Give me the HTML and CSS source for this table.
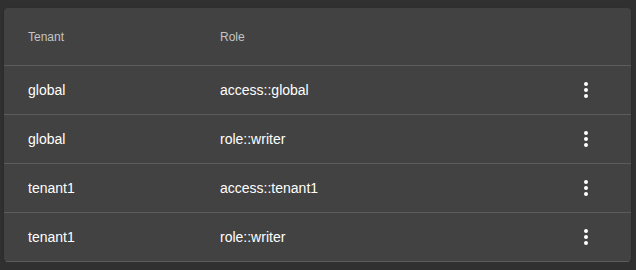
FILE: index.html
```html
<!DOCTYPE html>
<html lang="en">
<head>
    <meta charset="UTF-8">
    <meta name="viewport" content="width=device-width, initial-scale=1.0">
    <title>Tenant Roles</title>
    <link rel="stylesheet" href="styles.css">
</head>
<body>
    <div class="table-card">
        <table class="role-table">
            <thead>
                <tr>
                    <th class="col-tenant">Tenant</th>
                    <th>Role</th>
                    <th class="col-actions"></th>
                </tr>
            </thead>
            <tbody>
                <tr>
                    <td>global</td>
                    <td>access::global</td>
                    <td class="col-actions"><button class="menu-btn" aria-label="More"><svg viewBox="0 0 24 24" width="24" height="24"><circle cx="12" cy="6" r="2"/><circle cx="12" cy="12" r="2"/><circle cx="12" cy="18" r="2"/></svg></button></td>
                </tr>
                <tr>
                    <td>global</td>
                    <td>role::writer</td>
                    <td class="col-actions"><button class="menu-btn" aria-label="More"><svg viewBox="0 0 24 24" width="24" height="24"><circle cx="12" cy="6" r="2"/><circle cx="12" cy="12" r="2"/><circle cx="12" cy="18" r="2"/></svg></button></td>
                </tr>
                <tr>
                    <td>tenant1</td>
                    <td>access::tenant1</td>
                    <td class="col-actions"><button class="menu-btn" aria-label="More"><svg viewBox="0 0 24 24" width="24" height="24"><circle cx="12" cy="6" r="2"/><circle cx="12" cy="12" r="2"/><circle cx="12" cy="18" r="2"/></svg></button></td>
                </tr>
                <tr>
                    <td>tenant1</td>
                    <td>role::writer</td>
                    <td class="col-actions"><button class="menu-btn" aria-label="More"><svg viewBox="0 0 24 24" width="24" height="24"><circle cx="12" cy="6" r="2"/><circle cx="12" cy="12" r="2"/><circle cx="12" cy="18" r="2"/></svg></button></td>
                </tr>
            </tbody>
        </table>
    </div>
</body>
</html>
```

FILE: styles.css
```css
body {
    margin: 0;
    padding: 8px 5px 0 4px;
    background: #303030;
    font-family: 'Liberation Sans', Arial, sans-serif;
    color: #fff;
}
.table-card {
    background: #424242;
    border-radius: 4px;
    box-shadow: 0 2px 1px -1px rgba(0,0,0,.2), 0 1px 1px 0 rgba(0,0,0,.14), 0 1px 3px 0 rgba(0,0,0,.12);
    overflow: hidden;
}
.role-table {
    width: 100%;
    border-collapse: collapse;
}
.role-table th {
    height: 57px;
    padding: 0;
    text-align: left;
    font-size: 12px;
    font-weight: normal;
    color: #c4c4c4;
    border-bottom: 1px solid #5c5c5c;
}
.role-table td {
    height: 48px;
    padding: 0;
    font-size: 14px;
    color: #fff;
    border-bottom: 1px solid #5c5c5c;
}
.role-table .col-tenant,
.role-table tr td:first-child {
    width: 192px;
    padding-left: 24px;
}
.role-table .col-actions {
    width: 80px;
    padding-right: 33px;
    text-align: right;
}
.menu-btn {
    display: inline-flex;
    padding: 0;
    border: none;
    background: none;
    fill: #fff;
    cursor: pointer;
    vertical-align: middle;
}
```
